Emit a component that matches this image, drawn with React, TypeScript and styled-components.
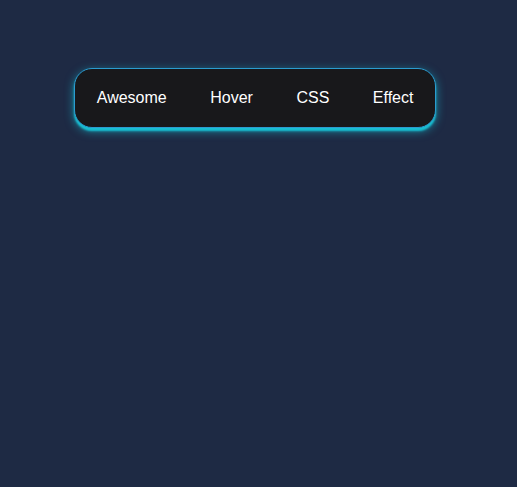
import React from "react";
import styled, { createGlobalStyle } from "styled-components";

const Global = createGlobalStyle`
  html, body { margin: 0; padding: 0; }
  body {
    background: #1e2a44;
    font-family: "Liberation Sans", Arial, sans-serif;
    min-height: 487px;
  }
`;

const Page = styled.div`
  padding: 68px 0 0 74px;
`;

const Nav = styled.nav`
  display: inline-flex;
  align-items: center;
  background: #18181b;
  border: 1px solid #2b9bd0;
  border-radius: 18px;
  box-shadow: 0 3px 2px #18bfd2, 0 3px 10px rgba(20, 205, 230, 0.6);
`;

const Item = styled.a`
  display: block;
  padding: 20px 21.75px;
  color: #ffffff;
  font-size: 16px;
  line-height: 18px;
  text-decoration: none;
  cursor: pointer;
`;

const items = ["Awesome", "Hover", "CSS", "Effect"];

export default function App() {
  return (
    <>
      <Global />
      <Page>
        <Nav>
          {items.map((t) => (
            <Item key={t}>{t}</Item>
          ))}
        </Nav>
      </Page>
    </>
  );
}
